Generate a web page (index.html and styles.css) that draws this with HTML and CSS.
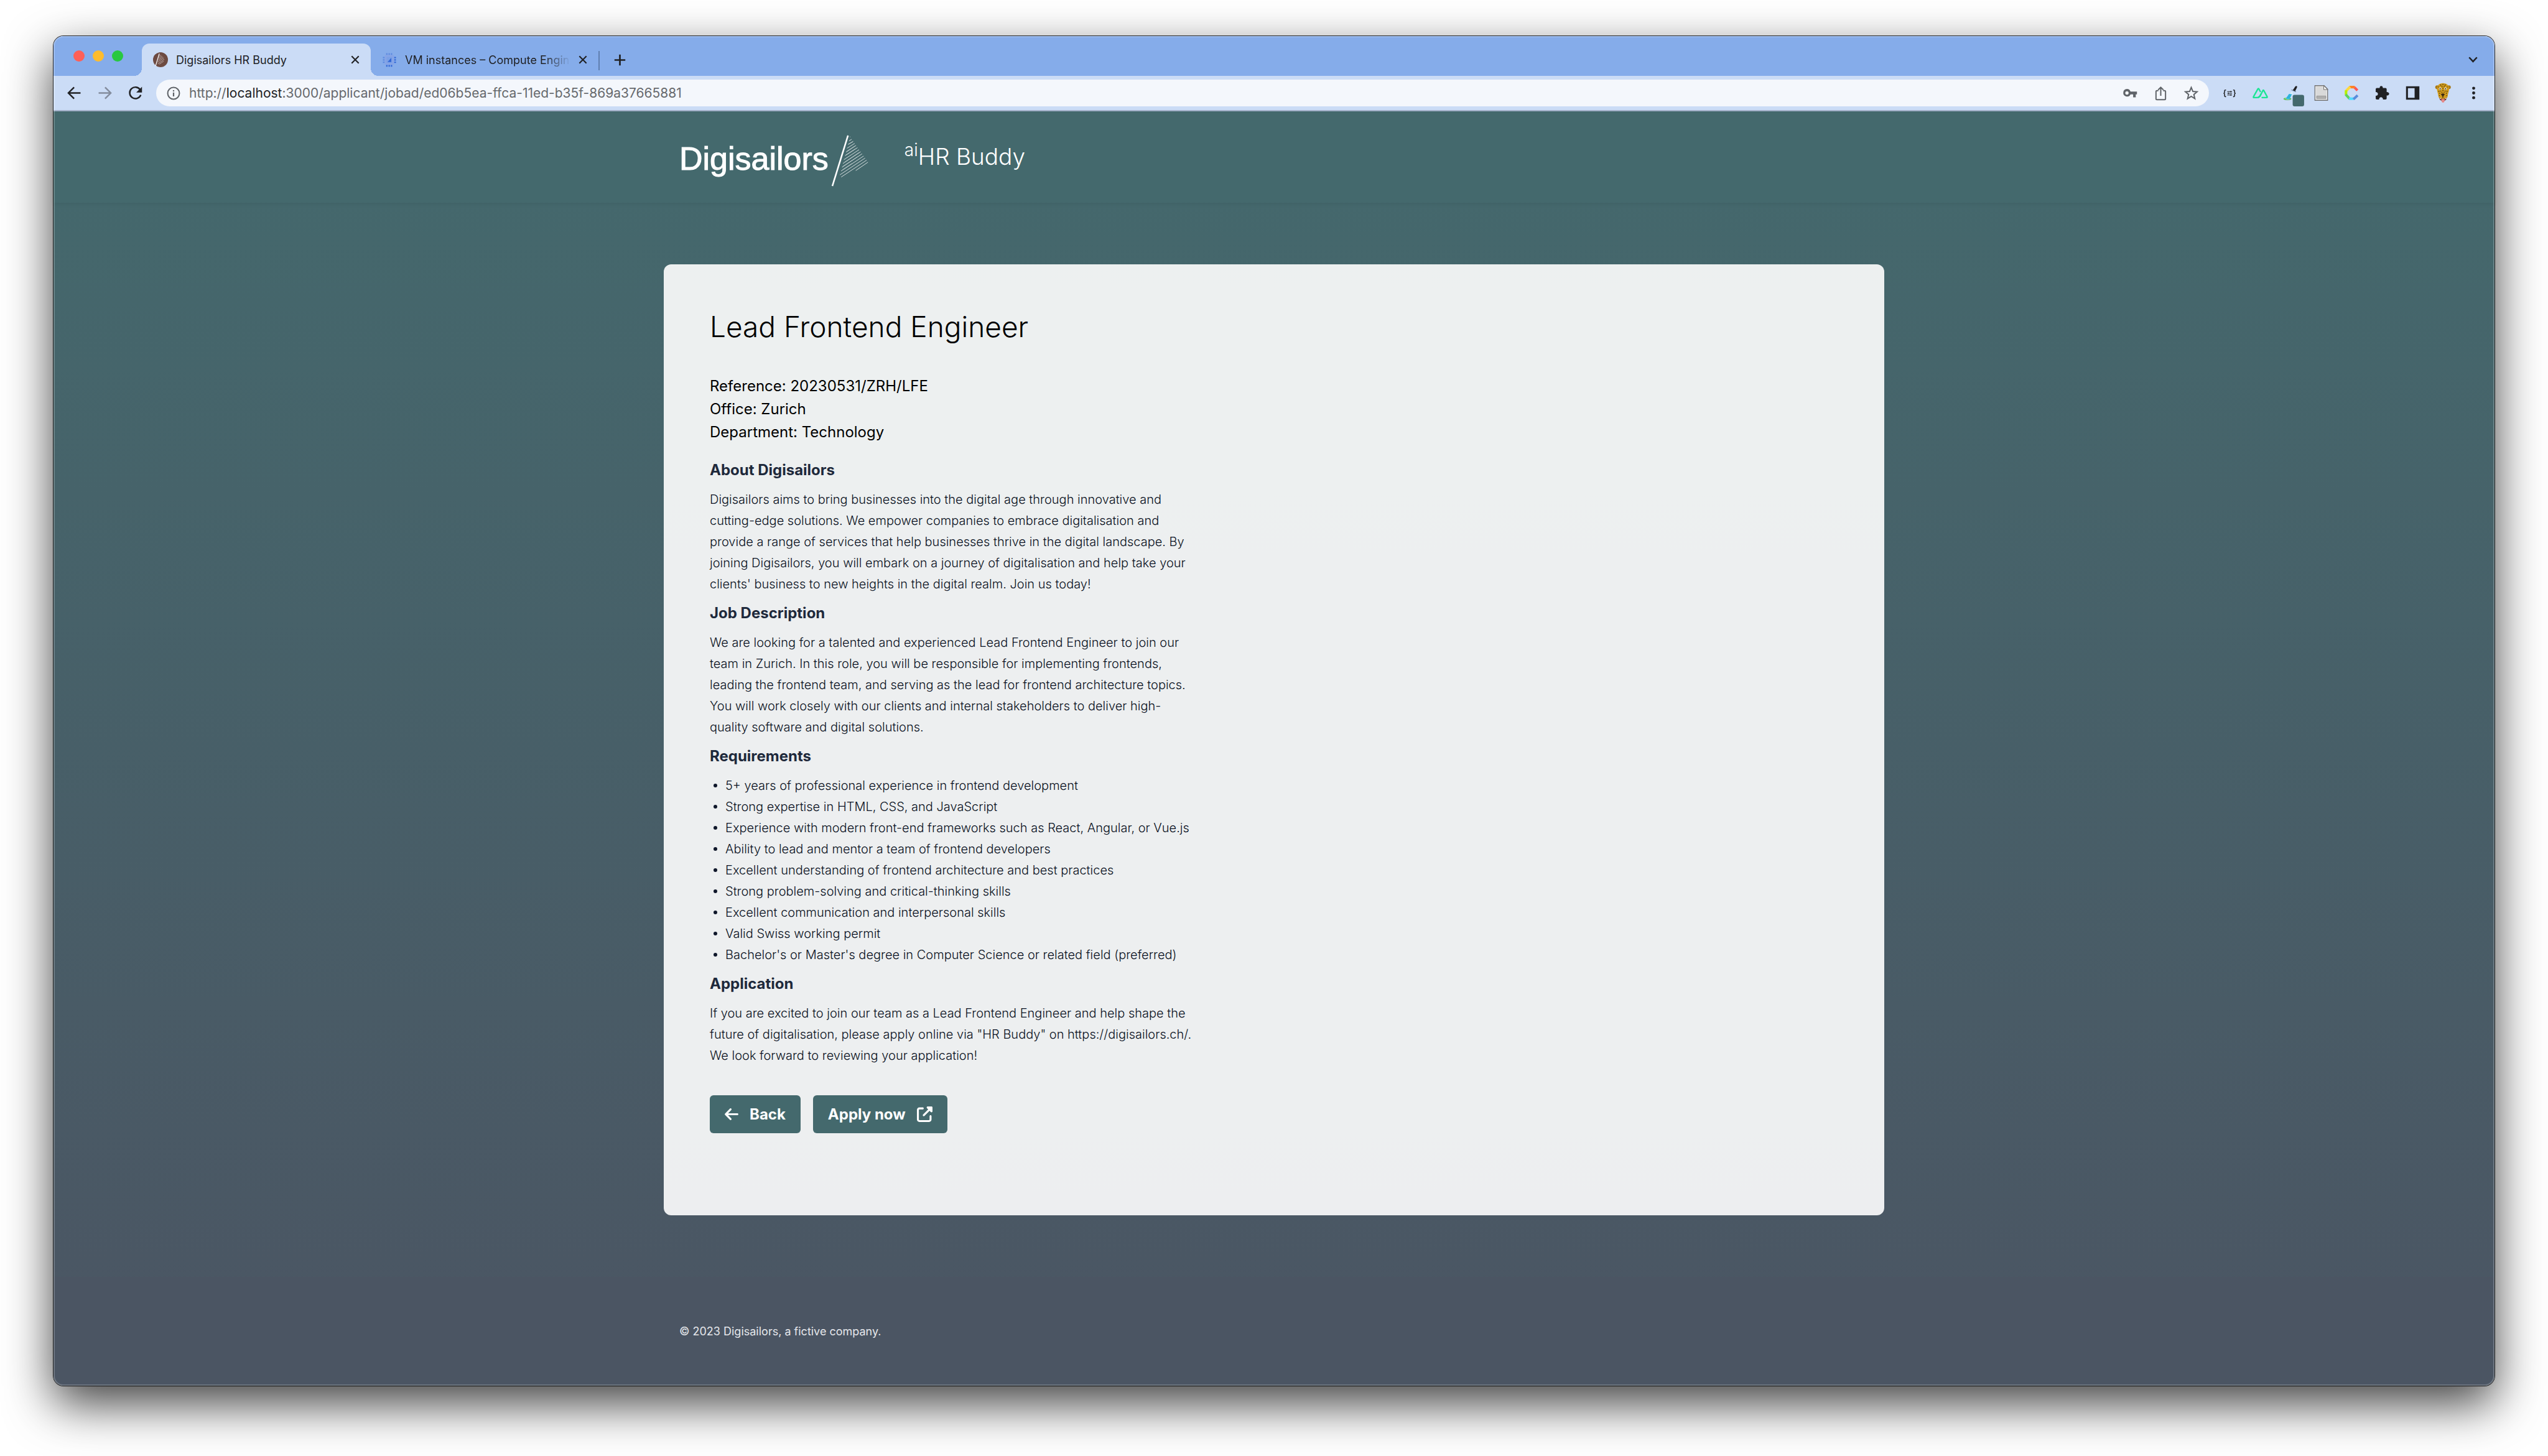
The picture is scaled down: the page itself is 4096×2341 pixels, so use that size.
FILE: index.html
```html
<!DOCTYPE html>
<html lang="en">
<head>
<meta charset="utf-8">
<title>Digisailors HR Buddy</title>
<link rel="stylesheet" href="styles.css">
</head>
<body>
<div class="window">
  <div class="tabstrip">
    <div class="lights"><span class="light red"></span><span class="light amber"></span><span class="light green"></span></div>
    <div class="tab active">
      <svg class="favicon" viewBox="0 0 32 32"><circle cx="16" cy="16" r="16" fill="#6d4a41"/><g stroke="#fff" fill="none"><path d="M13.500 3L5.500 29" stroke-width="1.600"/><path d="M13 9l4-3M12 13l7-5M11 17l10-7M10 21l13-9M10 25l14-10M13 26l10-7" stroke-width=".7"/></g></svg>
      <span class="tab-title">Digisailors HR Buddy</span>
      <button class="icon-btn close" aria-label="Close tab"><svg viewBox="0 0 16 16"><path d="M1.500 1.500l13 13M14.500 1.500l-13 13"/></svg></button>
    </div>
    <div class="tab">
      <svg class="favicon" viewBox="0 0 32 32"><g fill="#5f8ae0"><path d="M9 2h3v4H9zM14 2h3v4h-3zM19 2h3v4h-3zM2 10h4v3H2zM2 15h4v3H2zM2 20h4v3H2z"/></g><g fill="#3367d6"><path d="M9 27h3v4H9zM14 27h3v4h-3zM19 27h3v4h-3zM26 10h4v3h-4zM26 15h4v3h-4zM26 20h4v3h-4z"/></g><path fill="#86a4e6" d="M6 6h20v21H6z"/><path fill="#7aa0e6" d="M10 10h12v13H10z"/><path fill="#3367d6" d="M20 12v9h-8z"/></svg>
      <span class="tab-title faded">VM instances – Compute Engin</span>
      <button class="icon-btn close" aria-label="Close tab"><svg viewBox="0 0 16 16"><path d="M1.500 1.500l13 13M14.500 1.500l-13 13"/></svg></button>
    </div>
    <span class="tab-rule"></span>
    <button class="icon-btn new-tab" aria-label="New tab"><svg viewBox="0 0 24 24"><path d="M12 1v22M1 12h22"/></svg></button>
    <button class="icon-btn tab-search" aria-label="Search tabs"><svg viewBox="0 0 18 12"><path d="M1.500 1.500L9 9.500l7.500-8"/></svg></button>
  </div>

  <div class="toolbar">
    <button class="icon-btn slot" aria-label="Back"><svg viewBox="0 0 64 64" fill="none" stroke="#202124" stroke-width="3.200"><path d="M45 32H20M31.500 20L19.500 32l12 12"/></svg></button>
    <button class="icon-btn slot" aria-label="Forward"><svg viewBox="0 0 64 64" fill="none" stroke="#838c9d" stroke-width="3.200"><path d="M19 32h25M32.500 20l12 12-12 12"/></svg></button>
    <button class="icon-btn slot" aria-label="Reload"><svg viewBox="0 0 64 64"><path d="M42.500 25.500A12 12 0 1 0 43.500 36" fill="none" stroke="#202124" stroke-width="3.200"/><path d="M46 19v12H34z" fill="#202124"/></svg></button>
    <div class="omnibox">
      <svg class="info" viewBox="0 0 28 28" fill="none" stroke="#5f6368"><circle cx="14" cy="14" r="12" stroke-width="2.600"/><path d="M14 12.500v8M14 7.500v2.800" stroke-width="2.800"/></svg>
      <div class="url" role="textbox" aria-label="Address">http://<span class="host">localhost</span>:3000/applicant/jobad/ed06b5ea-ffca-11ed-b35f-869a37665881</div>
      <button class="icon-btn slot" aria-label="Passwords"><svg viewBox="0 0 64 64"><path fill="#5f6368" fill-rule="evenodd" d="M25 23.500a8 8 0 0 1 7.500 5.500h13.500v6h-2.500v6h-5.500v-6h-5.500a8 8 0 1 1-7.500-11.500zm0 5a3.500 3.500 0 1 0 0 7a3.500 3.500 0 0 0 0-7z"/></svg></button>
      <button class="icon-btn slot" aria-label="Share"><svg viewBox="0 0 64 64" fill="none" stroke="#5f6368" stroke-width="2.600"><path d="M27 27h-3a2 2 0 0 0-2 2v15a2 2 0 0 0 2 2h16a2 2 0 0 0 2-2V29a2 2 0 0 0-2-2h-3M32 38V20M26.500 25.500L32 20l5.500 5.500"/></svg></button>
      <button class="icon-btn slot" aria-label="Bookmark"><svg viewBox="0 0 64 64" fill="none" stroke="#5f6368" stroke-width="2.600"><path d="M32 20.500l3.400 8.200 8.900.7-6.800 5.800 2.100 8.700-7.600-4.700-7.600 4.700 2.100-8.700-6.800-5.800 8.900-.7z"/></svg></button>
    </div>
    <button class="icon-btn slot" aria-label="JSON viewer"><svg viewBox="-18 12 192 192" fill="none" stroke="#202124"><g stroke-width="6"><path d="M54 89h-4q-5 0-5 6v8q0 6-6 7q6 1 6 7v8q0 6 5 6h4M99 89h4q5 0 5 6v8q0 6 6 7q-6 1-6 7v8q0 6-5 6h-4"/></g><path d="M62 99h30M62 110h30M62 121h30" stroke-width="4"/><path d="M84 94v10M70 105v10M84 116v10" stroke-width="4"/></svg></button>
    <button class="icon-btn slot" aria-label="Nuxt"><svg viewBox="174 12 192 192" fill="none" stroke="#1ce594" stroke-width="9" stroke-linejoin="round"><path d="M254 137h-24q-5 0-3-5l28-50q3-4 6 0l11 20"/><path d="M254 137l14-8 19-38q2-3 4 0l22 40q3 6-3 6h-32"/><path d="M254 137q8-1 12-8l9-16"/></svg></button>
    <button class="icon-btn slot" aria-label="Colour picker"><svg viewBox="366 12 192 192"><ellipse cx="441" cy="145" rx="25" ry="8" fill="#58b957"/><ellipse cx="438" cy="143" rx="13" ry="4" fill="#a3ef62"/><path d="M466 100l12 6-26 44-20-4z" fill="#d9eef8"/><path d="M451 114l18 2-15 32-24-4z" fill="#2bb3dd"/><path d="M466 88l29 12" stroke="#7c95ab" stroke-width="6"/><path d="M475 90l14-21q7-8 12-3q3 3-1 10l-11 21z" fill="#202124"/><rect x="474" y="120" width="72" height="72" rx="12" fill="#44696d"/></svg></button>
    <button class="icon-btn slot" aria-label="Document"><svg viewBox="558 12 192 192"><path d="M614 62h58l22 22v70h-80z" fill="#f4f4f4" stroke="#707070" stroke-width="5"/><path d="M620 68h48l20 20v60h-68z" fill="#d9d9d9"/><path d="M670 62v24h24z" fill="#fff" stroke="#707070" stroke-width="4"/><path d="M625 127h58v15h-58z" fill="#b2b2b2" stroke="#8a8a8a" stroke-width="3"/></svg></button>
    <button class="icon-btn slot" aria-label="Colour wheel"><svg viewBox="750 12 192 192" fill="none" stroke-width="16"><path d="M882 92l-20-20" stroke="#ff5757"/><path d="M865 71h-33" stroke="#ff8126"/><path d="M836 69l-26 26" stroke="#ffd83d"/><path d="M810 91v30" stroke="#b6f000"/><path d="M808 117l24 27" stroke="#5fd35b"/><path d="M828 144h33" stroke="#52dcff"/><path d="M857 147l26-24" stroke="#5a8ddb"/></svg></button>
    <button class="icon-btn slot" aria-label="Extensions"><svg viewBox="942 12 192 192"><path fill="#202124" d="M1022 77c-2-18 22-18 20 0h17q7 0 7 7v18c21-1 21 23 0 22v18q0 7-7 7h-16c0-19-25-19-25 0h-14q-7 0-7-7v-16c19 0 19-24 0-24V84q0-7 7-7z"/></svg></button>
    <button class="icon-btn slot" aria-label="Side panel"><svg viewBox="1134 12 192 192"><path fill="#202124" fill-rule="evenodd" d="M1188 66h84v84h-84zm12 12v60h42V78z"/></svg></button>
    <button class="icon-btn slot" aria-label="Profile"><svg viewBox="1326 12 192 192"><circle cx="1384" cy="72" r="12" fill="#a87818"/><circle cx="1458" cy="72" r="12" fill="#a87818"/><path d="M1408 142h26l-5 22q-8 8-16 0z" fill="#e58a8a"/><path d="M1421 46c26 0 38 16 38 36 0 18-6 26-8 42-2 18-14 28-30 28s-28-10-30-28c-2-16-8-24-8-42 0-20 12-36 38-36z" fill="#cf9a1c"/><path d="M1398 136q23 18 46 0l-4 16q-19 10-38 0z" fill="#6d2f24"/><path d="M1400 139l6 8 4-7zM1434 140l4 7 6-8z" fill="#fff"/><path d="M1410 146h22l-4 18q-7 8-14 0z" fill="#e58a8a"/><circle cx="1403" cy="81" r="8" fill="#f2ead2"/><circle cx="1437" cy="81" r="8" fill="#f2ead2"/><circle cx="1403" cy="82" r="4" fill="#202124"/><circle cx="1437" cy="82" r="4" fill="#202124"/><path d="M1408 116q12-10 24 0l-8 12h-8z" fill="#3c2a12"/><path d="M1420 126v12M1404 58h5M1418 54h5M1432 58h5M1412 66h5M1426 66h5M1446 70h4M1390 70h4M1418 78h5M1392 98h5M1444 98h5M1402 96h4M1434 96h4M1418 92h5M1398 110h4M1440 110h4M1412 104h4M1426 104h4M1396 124h4M1442 124h4" stroke="#2b1f0d" stroke-width="5"/></svg></button>
    <button class="icon-btn slot" aria-label="Menu"><svg viewBox="0 0 64 64" fill="#202124"><circle cx="32" cy="22" r="3.200"/><circle cx="32" cy="32" r="3.200"/><circle cx="32" cy="42" r="3.200"/></svg></button>
  </div>

  <div class="page">
    <header class="site-header">
      <div class="container header-row">
        <a class="logo" href="#">
          <span class="logo-text">Digisailors</span>
          <svg class="sail" viewBox="40 36 240 332" fill="none" stroke="#fff"><path d="M147 42L48 362" stroke-width="10"/><path stroke-width="3" d="M158 52l3-2M154 76l16-10M147 99l33-20M141 123l48-31M135 147l63-42M129 170l78-51M121 195l96-63M115 219l112-74M109 243l127-85M103 267l143-95M96 291l159-106M104 305l161-107M196 264l77-53"/><path stroke-width="3" stroke-opacity=".4" d="M152 96l26-14M138 142l52-34M132 165l62-40M126 210l92-62M114 237l92-60M112 258l60-40"/></svg>
        </a>
        <div class="product"><sup>ai</sup>HR Buddy</div>
      </div>
    </header>
    <main class="container">
      <article class="card">
        <h1>Lead Frontend Engineer</h1>
        <div class="facts">
          <div>Reference: 20230531/ZRH/LFE</div>
          <div>Office: Zurich</div>
          <div>Department: Technology</div>
        </div>
        <div class="prose">
          <h2>About Digisailors</h2>
          <p>Digisailors aims to bring businesses into the digital age through innovative and cutting-edge solutions. We empower companies to embrace digitalisation and provide a range of services that help businesses thrive in the digital landscape. By joining Digisailors, you will embark on a journey of digitalisation and help take your clients' business to new heights in the digital realm. Join us today!</p>
          <h2>Job Description</h2>
          <p>We are looking for a talented and experienced Lead Frontend Engineer to join our team in Zurich. In this role, you will be responsible for implementing frontends, leading the frontend team, and serving as the lead for frontend architecture topics. You will work closely with our clients and internal stakeholders to deliver high-quality software and digital solutions.</p>
          <h2>Requirements</h2>
          <ul>
            <li>5+ years of professional experience in frontend development</li>
            <li>Strong expertise in HTML, CSS, and JavaScript</li>
            <li>Experience with modern front-end frameworks such as React, Angular, or Vue.js</li>
            <li>Ability to lead and mentor a team of frontend developers</li>
            <li>Excellent understanding of frontend architecture and best practices</li>
            <li>Strong problem-solving and critical-thinking skills</li>
            <li>Excellent communication and interpersonal skills</li>
            <li>Valid Swiss working permit</li>
            <li>Bachelor's or Master's degree in Computer Science or related field (preferred)</li>
          </ul>
          <h2>Application</h2>
          <p>If you are excited to join our team as a Lead Frontend Engineer and help shape the future of digitalisation, please apply online via "HR Buddy" on https://digisailors.ch/. We look forward to reviewing your application!</p>
        </div>
        <div class="actions">
          <button class="btn"><svg class="arrow" viewBox="0 0 448 512"><path fill="currentColor" d="M9.400 233.400c-12.500 12.500-12.500 32.800 0 45.300l160 160c12.500 12.500 32.800 12.500 45.300 0s12.500-32.800 0-45.300L109.200 288 416 288c17.700 0 32-14.300 32-32s-14.300-32-32-32l-306.700 0L214.600 118.600c12.500-12.500 12.500-32.800 0-45.300s-32.800-12.500-45.300 0l-160 160z"/></svg>Back</button>
          <button class="btn">Apply now<svg class="open" viewBox="0 0 512 512"><path fill="currentColor" d="M352 0c-12.900 0-24.600 7.800-29.600 19.800s-2.200 25.700 6.900 34.900L370.700 96 201.400 265.400c-12.500 12.500-12.500 32.800 0 45.300s32.800 12.500 45.300 0L416 141.300l41.400 41.400c9.200 9.200 22.900 11.900 34.900 6.900s19.800-16.600 19.800-29.600V32c0-17.700-14.300-32-32-32H352zM80 32C35.800 32 0 67.800 0 112V432c0 44.200 35.800 80 80 80H400c44.200 0 80-35.800 80-80V320c0-17.700-14.300-32-32-32s-32 14.300-32 32V432c0 8.800-7.200 16-16 16H80c-8.800 0-16-7.200-16-16V112c0-8.800 7.200-16 16-16H192c17.700 0 32-14.300 32-32s-14.300-32-32-32H80z"/></svg></button>
        </div>
      </article>
    </main>
    <footer class="site-footer">
      <div class="container footer-row">© 2023 Digisailors, a fictive company.</div>
    </footer>
  </div>
</div>
</body>
</html>
```
FILE: styles.css
```css
* { box-sizing: border-box; }

body {
  margin: 0;
  min-height: 100vh;
  padding: 58px 86px 113px;
  display: flex;
  flex-direction: column;
  background: #fff;
  font-family: Inter, "Liberation Sans", sans-serif;
  color: #000;
}

h1, h2, p, ul { margin: 0; padding: 0; }

button {
  font: inherit;
  border: 0;
  padding: 0;
  background: none;
}

svg { display: block; flex: none; }

/* Browser window */
.window {
  position: relative;
  flex: 1;
  display: flex;
  flex-direction: column;
  border-radius: 16px;
  box-shadow: 0 0 0 1px rgba(0, 0, 0, .8), 0 29px 77px rgba(0, 0, 0, .75);
}

.window::after {
  content: "";
  position: absolute;
  inset: 0;
  border-radius: 16px;
  box-shadow: inset 0 0 0 2px rgba(255, 255, 255, .2);
  pointer-events: none;
}

.tabstrip {
  display: flex;
  align-items: flex-end;
  height: 64px;
  background: #85acea;
  border-radius: 16px 16px 0 0;
}

.lights {
  align-self: center;
  display: flex;
  gap: 13px;
  width: 142px;
  padding-left: 32px;
}

.light { width: 18px; height: 18px; border-radius: 50%; }
.red { background: #ff5f57; }
.amber { background: #febc2e; }
.green { background: #28c840; }

.tab {
  position: relative;
  display: flex;
  align-items: center;
  gap: 13px;
  width: 366px;
  height: 52px;
  padding: 0 18px;
  font-size: 18px;
  color: #202124;
}

.tab.active {
  width: 368px;
  background: #cbdcf6;
  border-radius: 12px 12px 0 0;
}

.tab.active::before,
.tab.active::after {
  content: "";
  position: absolute;
  bottom: 0;
  width: 12px;
  height: 12px;
}

.tab.active::before {
  right: 100%;
  background: radial-gradient(circle at 0 0, transparent 12px, #cbdcf6 12px);
}

.tab.active::after {
  left: 100%;
  background: radial-gradient(circle at 100% 0, transparent 12px, #cbdcf6 12px);
}

.favicon { width: 24px; height: 24px; }

.tab-title {
  flex: 1;
  white-space: nowrap;
}

.faded {
  mask-image: linear-gradient(to right, #000 84%, transparent);
}

.icon-btn {
  display: flex;
  align-items: center;
  justify-content: center;
  flex: none;
}

.close svg { width: 14px; height: 14px; fill: none; stroke: #202124; stroke-width: 2.4; }

.tab-rule { width: 2px; height: 31px; margin-bottom: 9px; background: #5f7fb0; }

.new-tab { height: 52px; margin-left: 23px; }
.new-tab svg { width: 19px; height: 19px; fill: none; stroke: #202124; stroke-width: 3.4; }

.tab-search { height: 52px; margin-left: auto; margin-right: 27px; }
.tab-search svg { width: 15px; height: 10px; fill: none; stroke: #202124; stroke-width: 3; }

.toolbar {
  display: flex;
  align-items: center;
  height: 57px;
  padding: 0 9px;
  background: #cbdcf6;
  border-bottom: 2px solid #a3b1c8;
}

.slot, .slot svg { width: 49px; height: 49px; }

.omnibox {
  flex: 1;
  display: flex;
  align-items: center;
  height: 43px;
  margin: 0 9px;
  padding: 0 4px 0 17px;
  border-radius: 22px;
  background: #f4f7fc;
}

.info { width: 22px; height: 22px; margin-right: 14px; }

.url {
  flex: 1;
  font-size: 21px;
  color: #66696d;
}

.host { color: #202124; }

/* Site */
.page {
  flex: 1;
  display: flex;
  flex-direction: column;
  background: linear-gradient(#44696d, #4b5563);
  border-radius: 0 0 16px 16px;
}

.container {
  width: 100%;
  max-width: 1962px;
  margin: 0 auto;
}

.site-header {
  height: 147px;
  background: #44696d;
  box-shadow: 0 2px 6px rgba(0, 0, 0, .06);
}

.header-row {
  display: flex;
  align-items: center;
  height: 100%;
  padding: 0 25px;
}

.logo {
  display: flex;
  align-items: center;
  gap: 4px;
  padding-top: 12px;
  color: #fff;
  text-decoration: none;
}

.logo-text {
  font-family: "Liberation Sans", Arial, sans-serif;
  font-size: 52px;
  line-height: 58px;
  padding-bottom: 8px;
  -webkit-text-stroke: 1px #fff;
}

.sail { width: 61px; height: 85px; }

.product {
  margin-left: 57px;
  padding-bottom: 2px;
  font-size: 37px;
  line-height: 56px;
  font-weight: 300;
  color: #fff;
}

.product sup {
  position: relative;
  top: -14px;
  font-size: 28px;
  line-height: 0;
  vertical-align: baseline;
}

main.container {
  flex: 1;
  padding: 99px 0 98px;
}

.card {
  padding: 73px 74px 132px;
  border-radius: 12px;
  background: rgba(255, 255, 255, .9);
}

h1 {
  font-size: 46px;
  line-height: 54px;
  font-weight: 300;
}

.facts {
  margin: 50px 0 24px;
  font-size: 24px;
  line-height: 37px;
}

.prose {
  max-width: 784px;
  font-size: 20px;
  line-height: 34px;
  font-weight: 300;
  color: #0a1122;
}

h2 {
  margin: 11px 0 12px;
  font-size: 24px;
  line-height: 37px;
  font-weight: 700;
  color: #1e293b;
}

h2:first-child { margin-top: 0; }

ul { list-style: none; padding-left: 6px; }

li {
  display: flex;
  align-items: center;
  gap: 13px;
  white-space: nowrap;
}

li::before {
  content: "";
  width: 6px;
  height: 6px;
  border-radius: 50%;
  background: #0f172a;
}

.actions {
  display: flex;
  gap: 20px;
  margin-top: 47px;
}

.btn {
  display: flex;
  align-items: center;
  gap: 18px;
  height: 61px;
  padding: 0 24px;
  border-radius: 6px;
  background: #44696d;
  color: #fff;
  font-size: 24px;
  font-weight: 700;
}

.arrow { width: 22px; height: 25px; }
.open { width: 25px; height: 25px; }

.site-footer {
  height: 175px;
  background: #4b5563;
  border-radius: 0 0 16px 16px;
}

.footer-row {
  display: flex;
  align-items: center;
  height: 100%;
  padding: 0 25px;
  font-size: 18px;
  color: #e5e7eb;
}
```
